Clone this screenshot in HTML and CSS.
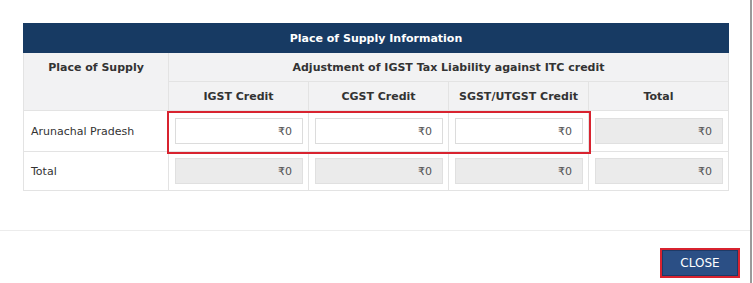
FILE: index.html
```html
<!DOCTYPE html>
<html lang="en">
<head>
    <meta charset="UTF-8">
    <title>Place of Supply Information</title>
    <link rel="stylesheet" href="styles.css">
</head>
<body>
    <div class="modal">
        <div class="modal-body">
            <div class="table-wrap">
                <table class="pos-table">
                    <colgroup>
                        <col class="c-place">
                        <col class="c-amt">
                        <col class="c-amt">
                        <col class="c-amt">
                        <col class="c-amt">
                    </colgroup>
                    <thead>
                        <tr class="title-row">
                            <th colspan="5">Place of Supply Information</th>
                        </tr>
                        <tr class="sub-row">
                            <th rowspan="2" class="place-head">Place of Supply</th>
                            <th colspan="4">Adjustment of IGST Tax Liability against ITC credit</th>
                        </tr>
                        <tr class="sub-row">
                            <th>IGST Credit</th>
                            <th>CGST Credit</th>
                            <th>SGST/UTGST Credit</th>
                            <th>Total</th>
                        </tr>
                    </thead>
                    <tbody>
                        <tr class="data-row">
                            <td>Arunachal Pradesh</td>
                            <td><input class="amt" type="text" value="₹0"></td>
                            <td><input class="amt" type="text" value="₹0"></td>
                            <td><input class="amt" type="text" value="₹0"></td>
                            <td><input class="amt" type="text" value="₹0" disabled></td>
                        </tr>
                        <tr class="total-row">
                            <td>Total</td>
                            <td><input class="amt" type="text" value="₹0" disabled></td>
                            <td><input class="amt" type="text" value="₹0" disabled></td>
                            <td><input class="amt" type="text" value="₹0" disabled></td>
                            <td><input class="amt" type="text" value="₹0" disabled></td>
                        </tr>
                    </tbody>
                </table>
                <div class="highlight"></div>
            </div>
        </div>
        <div class="modal-footer">
            <button class="btn-close" type="button">CLOSE</button>
        </div>
    </div>
</body>
</html>
```

FILE: styles.css
```css
html, body {
    margin: 0;
    padding: 0;
    background: #fff;
}

body {
    font-family: "DejaVu Sans", Verdana, sans-serif;
    font-size: 11px;
    color: #333;
}

.modal {
    width: 750px;
    height: 283px;
    border-right: 2px solid #9a9a9a;
    display: flex;
    flex-direction: column;
}

.modal-body {
    padding: 23px 22px 0 23px;
    height: 207px;
}

.table-wrap {
    position: relative;
    width: 705px;
}

.pos-table {
    width: 705px;
    table-layout: fixed;
    border-collapse: collapse;
}

.c-place {
    width: 145px;
}

.c-amt {
    width: 140px;
}

.pos-table th,
.pos-table td {
    border: 1px solid #e3e3e3;
    padding: 0;
}

.title-row th {
    background: #173a63;
    color: #fff;
    height: 28px;
    font-weight: bold;
    border-color: #173a63;
}

.sub-row th {
    background: #f2f2f3;
    color: #333;
    font-weight: bold;
    height: 28px;
}

.place-head {
    vertical-align: top;
    padding-top: 8px !important;
}

.data-row td {
    height: 40px;
}

.total-row td {
    height: 38px;
}

.pos-table td:first-child {
    padding-left: 7px;
    color: #333;
}

.pos-table td:not(:first-child) {
    padding: 0 6px 0 6px;
}

.amt {
    box-sizing: border-box;
    width: 128px;
    height: 26px;
    display: block;
    border: 1px solid #dcdcdc;
    background: #fff;
    text-align: right;
    padding: 0 10px 0 4px;
    font-family: "DejaVu Sans", Verdana, sans-serif;
    font-size: 11px;
    color: #555;
}

.amt:disabled {
    background: #ebebeb;
    border-color: #e0e0e0;
    color: #555;
}

.highlight {
    position: absolute;
    left: 144px;
    top: 88px;
    width: 420px;
    height: 39px;
    border: 2px solid #d8232f;
    pointer-events: none;
}

.modal-footer {
    border-top: 1px solid #ececec;
    flex: 1;
    display: flex;
    justify-content: flex-end;
    align-items: flex-start;
    padding: 17px 10px 0 0;
}

.btn-close {
    width: 80px;
    height: 30px;
    background: #2b4f85;
    color: #fff;
    border: 2px solid #d8232f;
    box-shadow: inset 0 0 0 1px #1e3a66;
    font-family: "DejaVu Sans", Verdana, sans-serif;
    font-size: 12px;
    padding: 0;
}
```
